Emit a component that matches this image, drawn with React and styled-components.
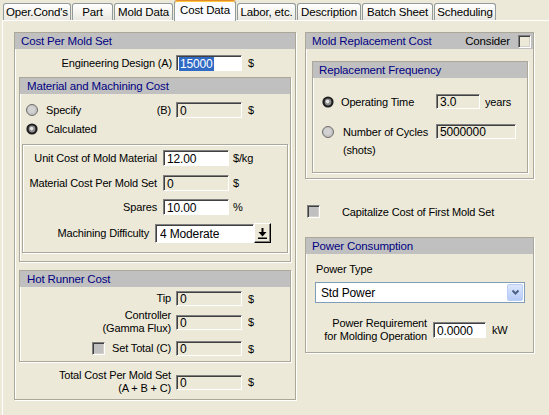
import React from 'react'
import styled, { createGlobalStyle } from 'styled-components'

const GlobalStyle = createGlobalStyle`
  html, body {
    margin:0;
    padding:0;
    background:#ECE9D8;
  }
  body {
    font-family:"Liberation Sans", Arial, sans-serif;
    font-size:11px;
    letter-spacing:-0.15px;
    color:#000;
  }
`

const Window = styled.div`
  width:549px;
  height:415px;
  overflow:hidden;
  background:#ECE9D8;
`

const TabStrip = styled.div`
  display:flex;
  align-items:flex-end;
  gap:1px;
  height:20px;
  padding-left:3px;
  position:relative;
  z-index:2;
`

const Tab = styled.div`
  box-sizing:border-box;
  width:${({ $w }) => $w}px;
  height:${({ $active }) => ($active ? 21 : 17)}px;
  margin-bottom:${({ $active }) => ($active ? -1 : 0)}px;
  border:1px solid #919B9C;
  border-bottom:none;
  border-top-color:${({ $active }) => ($active ? '#E68B2C' : '#919B9C')};
  border-radius:3px 3px 0 0;
  box-shadow:${({ $active }) => ($active ? 'inset 0 1px 0 #FFC83C' : 'none')};
  background:${({ $active }) =>
    $active ? '#FCFCFE' : 'linear-gradient(#FFFFFF, #F3F2EC 60%, #E8E7E0)'};
  display:flex;
  align-items:center;
  justify-content:center;
  padding-bottom:${({ $active }) => ($active ? 3 : 0)}px;
  font-size:11.5px;
  white-space:nowrap;
`

const Panel = styled.div`
  margin-left:2px;
  height:394px;
  border-top:1px solid #fff;
  border-left:1px solid #fff;
  display:flex;
  gap:9px;
  padding:11px 0 0 11px;
`

const Column = styled.div`
  width:${({ $w }) => $w}px;
  display:flex;
  flex-direction:column;
  align-self:flex-start;
`

const Group = styled.div`
  border:1px solid #ACA899;
  box-shadow:inset 1px 1px 0 #fff, 1px 1px 0 #fff;
  display:flex;
  flex-direction:column;
  margin:${({ $m }) => $m || '0'};
`

const Header = styled.div`
  height:16px;
  background:#C0C0C0;
  color:#000080;
  font-size:11.5px;
  display:flex;
  align-items:center;
  justify-content:space-between;
  padding:0 ${({ $pr }) => $pr || 0}px 0 ${({ $pl }) => $pl || 6}px;
`

const HeaderAside = styled.span`
  display:flex;
  align-items:center;
  gap:8px;
  color:#000;
`

const Row = styled.div`
  display:flex;
  align-items:center;
  height:${({ $h }) => $h || 16}px;
  margin-top:${({ $mt }) => $mt || 0}px;
  margin-bottom:${({ $mb }) => $mb || 0}px;
  padding-left:${({ $pl }) => $pl || 0}px;
`

const Label = styled.div`
  box-sizing:border-box;
  flex:0 0 ${({ $w }) => $w}px;
  padding-right:${({ $pr }) => $pr ?? 5}px;
  text-align:right;
  line-height:13px;
  display:flex;
  align-items:center;
  justify-content:flex-end;
  gap:${({ $gap }) => $gap || 0}px;
`

const Choice = styled.div`
  box-sizing:border-box;
  flex:0 0 ${({ $w }) => $w}px;
  display:flex;
  align-items:center;
  padding-right:5px;
`

const ChoiceText = styled.span`
  margin-left:${({ $ml }) => $ml || 8}px;
  flex:1;
`

const Field = styled.div`
  box-sizing:border-box;
  flex:0 0 auto;
  width:${({ $w }) => $w || 66}px;
  height:${({ $h }) => $h || 16}px;
  background:${({ $edit }) => ($edit ? '#fff' : '#ECE9D8')};
  border:1px solid;
  border-color:#808080 #fff #fff #808080;
  box-shadow:inset 1px 1px 0 #404040;
  font-size:12px;
  display:flex;
  align-items:center;
  padding:1px 0 0 3px;
  white-space:nowrap;
`

const Selected = styled.span`
  background:#316AC5;
  color:#fff;
  margin-left:-1px;
  padding:0 1px;
`

const Unit = styled.span`
  margin-left:${({ $ml }) => $ml ?? 6}px;
`

const Box = styled.span`
  box-sizing:border-box;
  flex:0 0 13px;
  width:13px;
  height:13px;
  border:1px solid;
  border-color:#808080 #fff #fff #808080;
  box-shadow:inset 1px 1px 0 #404040, inset -1px -1px 0 #D4D0C8;
  background:${({ $fill }) => $fill || '#C0C0C0'};
`

const CheckText = styled.span`
  margin-left:${({ $ml }) => $ml}px;
`

const Combo = styled.div`
  display:flex;
  align-items:flex-start;
  height:20px;
`

const ComboField = styled(Field)`
  margin-top:1px;
  height:19px;
  width:99px;
  background:#fff;
  padding-left:4px;
`

const ComboButton = styled.div`
  box-sizing:border-box;
  width:17px;
  height:20px;
  border:1px solid;
  border-color:#fff #000 #000 #fff;
  box-shadow:inset -1px -1px 0 #808080;
  background:#ECE9D8;
  display:flex;
  align-items:center;
  justify-content:center;
`

const Select = styled.div`
  box-sizing:border-box;
  height:21px;
  margin:6px 8px 0 9px;
  border:1px solid #7F9DB9;
  background:#fff;
  display:flex;
  align-items:center;
  justify-content:space-between;
  padding:0 1px 0 5px;
  font-size:12px;
`

const SelectButton = styled.div`
  box-sizing:border-box;
  width:16px;
  height:17px;
  border:1px solid #BACDF5;
  border-radius:2px;
  background:linear-gradient(#DCE7FD, #B7CBF7);
  display:flex;
  align-items:center;
  justify-content:center;
`

const Text = styled.div`
  line-height:${({ $lh }) => $lh || 14}px;
  margin-top:${({ $mt }) => $mt || 0}px;
  margin-bottom:${({ $mb }) => $mb || 0}px;
  padding-left:${({ $pl }) => $pl || 0}px;
`

const tabs = [
  { label: "Oper.Cond's", w: 68 },
  { label: 'Part', w: 41 },
  { label: 'Mold Data', w: 59 },
  { label: 'Cost Data', w: 62, active: true },
  { label: 'Labor, etc.', w: 59 },
  { label: 'Description', w: 64 },
  { label: 'Batch Sheet', w: 71 },
  { label: 'Scheduling', w: 62 },
]

function Radio({ on }) {
  return (
    <svg width="12" height="12" viewBox="0 0 12 12" style={{ flex: '0 0 12px' }}>
      {on ? (
        <>
          <circle cx="6" cy="6" r="5.6" fill="#1E1E1E" />
          <circle cx="6" cy="6" r="3.4" fill="#8C8C8C" />
          <circle cx="5.6" cy="5.6" r="1.8" fill="#E4E4E4" />
        </>
      ) : (
        <>
          <circle cx="6" cy="6" r="5.5" fill="#C4C4C4" stroke="#6E6E6E" strokeWidth="1" />
          <circle cx="5.5" cy="5.5" r="3.5" fill="#D2D2D2" />
        </>
      )}
    </svg>
  )
}

function DownArrow() {
  return (
    <svg width="9" height="11" viewBox="0 0 9 11">
      <path d="M3.5 0h2v4h3l-4 4.5L0.5 4h3z" fill="#000" />
      <rect x="0" y="9.5" width="9" height="1.5" fill="#000" />
    </svg>
  )
}

function Chevron() {
  return (
    <svg width="9" height="7" viewBox="0 0 9 7">
      <path d="M1.5 1.5l3 3 3-3" fill="none" stroke="#4D6185" strokeWidth="2" />
    </svg>
  )
}

export default function App() {
  return (
    <Window>
      <GlobalStyle />
      <TabStrip>
        {tabs.map((t) => (
          <Tab key={t.label} $w={t.w} $active={t.active}>{t.label}</Tab>
        ))}
      </TabStrip>
      <Panel>
        <Column $w={282}>
          <Group>
            <Header>Cost Per Mold Set</Header>
            <Row $mt={6}>
              <Label $w={161} $pr={4}>Engineering Design (A)</Label>
              <Field $edit><Selected>15000</Selected></Field>
              <Unit>$</Unit>
            </Row>

            <Group $m="6px 4px 0 4px">
              <Header $pl={7}>Material and Machining Cost</Header>
              <Row $mt={8} $pl={6}>
                <Choice $w={150}>
                  <Radio />
                  <ChoiceText>Specify</ChoiceText>
                  <span>(B)</span>
                </Choice>
                <Field>0</Field>
                <Unit>$</Unit>
              </Row>
              <Row $mt={3} $pl={6}>
                <Choice $w={150}>
                  <Radio on />
                  <ChoiceText>Calculated</ChoiceText>
                </Choice>
              </Row>

              <Group $m="7px 2px 8px 2px">
                <Row $mt={5}>
                  <Label $w={140} $pr={6}>Unit Cost of Mold Material</Label>
                  <Field $edit>12.00</Field>
                  <Unit $ml={4}>$/kg</Unit>
                </Row>
                <Row $mt={9}>
                  <Label $w={140} $pr={6}>Material Cost Per Mold Set</Label>
                  <Field>0</Field>
                  <Unit $ml={4}>$</Unit>
                </Row>
                <Row $mt={8}>
                  <Label $w={140} $pr={6}>Spares</Label>
                  <Field $edit>10.00</Field>
                  <Unit $ml={4}>%</Unit>
                </Row>
                <Row $mt={8} $mb={9} $h={20}>
                  <Label $w={132} $pr={6}>Machining Difficulty</Label>
                  <Combo>
                    <ComboField>4 Moderate</ComboField>
                    <ComboButton><DownArrow /></ComboButton>
                  </Combo>
                </Row>
              </Group>
            </Group>

            <Group $m="8px 4px 0 4px">
              <Header $pl={7}>Hot Runner Cost</Header>
              <Row $mt={4} $h={15}>
                <Label $w={156}>Tip</Label>
                <Field $h={15}>0</Field>
                <Unit>$</Unit>
              </Row>
              <Row $mt={3} $h={26}>
                <Label $w={156}>Controller<br />(Gamma Flux)</Label>
                <Field $h={15}>0</Field>
                <Unit>$</Unit>
              </Row>
              <Row $mt={6} $mb={5} $h={15}>
                <Label $w={156} $gap={7}>
                  <Box />
                  <span>Set Total (C)</span>
                </Label>
                <Field $h={15}>0</Field>
                <Unit>$</Unit>
              </Row>
            </Group>

            <Row $mt={7} $mb={4} $h={26}>
              <Label $w={161}>Total Cost Per Mold Set<br />(A + B + C)</Label>
              <Field $h={15}>0</Field>
              <Unit>$</Unit>
            </Row>
          </Group>
        </Column>

        <Column $w={229}>
          <Group>
            <Header $pr={2}>
              <span>Mold Replacement Cost</span>
              <HeaderAside>
                Consider
                <Box $fill="#ECE9D8" />
              </HeaderAside>
            </Header>
            <Group $m="12px 5px 5px 6px">
              <Header>Replacement Frequency</Header>
              <Row $mt={16} $h={15} $pl={9}>
                <Radio on />
                <Choice $w={102}>
                  <ChoiceText $ml={7}>Operating Time</ChoiceText>
                </Choice>
                <Field $w={44} $h={15}>3.0</Field>
                <Unit $ml={5}>years</Unit>
              </Row>
              <Row $mt={15} $h={15} $pl={9}>
                <Radio />
                <Choice $w={102}>
                  <ChoiceText $ml={9}>Number of Cycles</ChoiceText>
                </Choice>
                <Field $w={80} $h={15}>5000000</Field>
              </Row>
              <Text $mt={5} $mb={15} $lh={13} $pl={30}>(shots)</Text>
            </Group>
          </Group>

          <Row $mt={26} $h={13} $pl={2}>
            <Box />
            <CheckText $ml={22}>Capitalize Cost of First Mold Set</CheckText>
          </Row>

          <Group $m="19px 0 0 0">
            <Header>Power Consumption</Header>
            <Text $mt={8} $pl={10}>Power Type</Text>
            <Select>
              <span>Std Power</span>
              <SelectButton><Chevron /></SelectButton>
            </Select>
            <Row $mt={14} $mb={9} $h={26}>
              <Label $w={127} $pr={6}>Power Requirement<br />for Molding Operation</Label>
              <Field $edit $w={53}>0.0000</Field>
              <Unit>kW</Unit>
            </Row>
          </Group>
        </Column>
      </Panel>
    </Window>
  )
}
